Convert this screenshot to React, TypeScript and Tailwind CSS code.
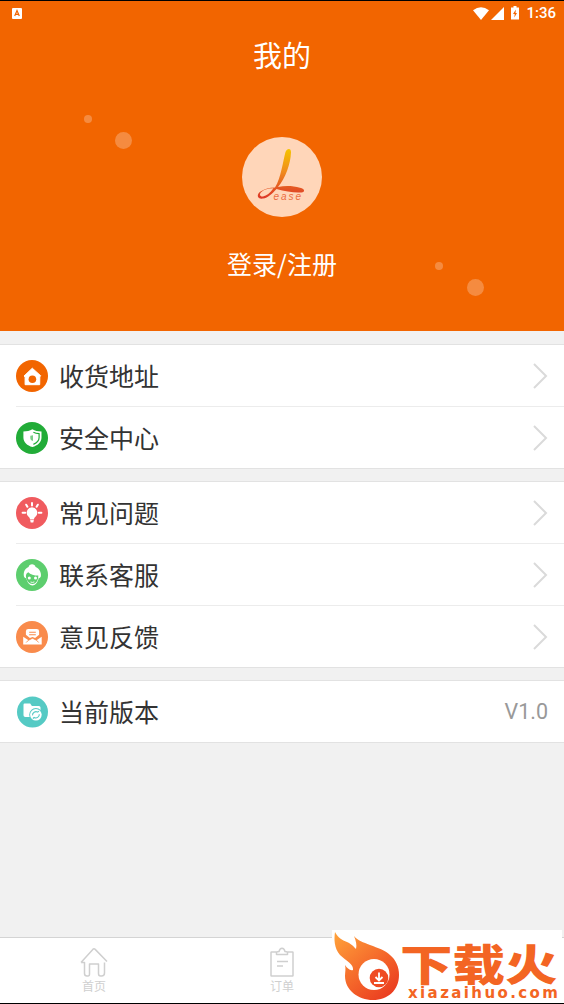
import type { ReactNode } from "react";

type MenuItem = {
  label: string;
  icon: ReactNode;
  value?: string;
};

const HomeBadge = () => (
  <svg viewBox="0 0 32 32" className="size-8 shrink-0">
    <circle cx="16" cy="16" r="16" fill="#f26500" />
    <path
      d="M16.3 8.2 24.7 15.8 23.8 16.8 23.7 24.7H9.1V16.8L8 16.1Z"
      fill="#fff"
      stroke="#fff"
      strokeWidth="1"
      strokeLinejoin="round"
    />
    <circle cx="16.4" cy="19.2" r="3.8" fill="#f26500" />
  </svg>
);

const ShieldBadge = () => (
  <svg viewBox="0 0 32 32" className="size-8 shrink-0">
    <circle cx="16" cy="16" r="16" fill="#22ac38" />
    <path d="M16.4 7.2c2.6 1.8 5.2 2.2 9.1 2.2v6c0 4.9-3.9 8-9.1 9.6-5.2-1.6-9-4.7-9-9.6v-6c3.4 0 6.4-.4 9-2.2Z" fill="#fff" />
    <path d="M17.4 10.300c2 1 3.700 1.300 5.700 1.400v3.900c0 3.300-2.400 5.400-5.700 6.800" fill="none" stroke="#22ac38" strokeWidth="1.200" />
    <path d="M17 13.300v5.800c-1.700-.6-2.700-1.600-2.700-3.100V13.700c1 0 1.900-.1 2.700-.4Z" fill="#22ac38" opacity=".6" />
  </svg>
);

const BulbBadge = () => (
  <svg viewBox="0 0 32 32" className="size-8 shrink-0">
    <circle cx="16" cy="16" r="16" fill="#f05b5f" />
    <path d="M16 10.300a5.500 5.500 0 0 1 3.200 9.800c-.8.7-1.100 1.300-1.200 2.500l-.7 2.800h-2.600l-.7-2.800c-.1-1.200-.4-1.800-1.200-2.500a5.500 5.500 0 0 1 3.200-9.800Z" fill="#fff" />
    <path d="M14 22.600h4" stroke="#f05b5f" strokeWidth=".6" />
    <path d="M16 6v2.600M10.200 7.700l1.200 2M21.800 7.700l-1.200 2M6.600 15.700h2.600M22.800 15.700h2.600" stroke="#fff" strokeWidth="2" strokeLinecap="round" />
  </svg>
);

const ServiceBadge = () => (
  <svg viewBox="0 0 32 32" className="size-8 shrink-0">
    <circle cx="16" cy="16" r="16" fill="#5dce6e" />
    <path d="M12.600 7.900c.5-3.400 6.300-3.400 7 0 4.400 1.900 6 6.400 5.200 9.700-.2 1-1.300 1.700-2 1.500-1.200 4.600-3.600 7.500-6.300 7.500s-5.200-2.900-6.300-7.500c-1 .2-2-.6-2.200-1.500-.8-4 .3-7.800 4.600-9.700Z" fill="#fff" />
    <path d="M9.900 17c0-1.600.8-3 2.400-3.800 2 2.600 5.800 3.300 10 3.300.2 5-2.700 8.500-5.800 8.500-3.300 0-6.300-3.400-6.600-8Z" fill="#5dce6e" />
    <circle cx="13.300" cy="19" r="1.500" fill="#fff" />
    <circle cx="19.500" cy="19" r="1.500" fill="#fff" />
    <path d="M14.500 23q1.800.9 3.900-.1" stroke="#fff" strokeWidth=".9" fill="none" />
  </svg>
);

const MailBadge = () => (
  <svg viewBox="0 0 32 32" className="size-8 shrink-0">
    <circle cx="16" cy="16" r="16" fill="#f98b4c" />
    <path d="M12.300 8h8.400q2.400 0 2.400 2.300v3.500l-4 3.200-2.600-1-2.600 1-4-3.200v-3.500q0-2.300 2.400-2.300Z" fill="#fff" />
    <path d="M13.200 11.200h6.600M13.200 13.800h6.600" stroke="#f98b4c" strokeWidth="1.100" />
    <path d="m7.200 15.800 5.300 3.400 4-1.900 4 1.900 5.200-3.400v7.700H7.200Z" fill="#fff" />
    <path d="m10.200 21.500 2.300-2.300 4-2 4 2 2.200 2.300" stroke="#f98b4c" strokeWidth=".9" fill="none" />
  </svg>
);

const VersionBadge = () => (
  <svg viewBox="0 0 32 32" className="size-8 shrink-0">
    <circle cx="16.500" cy="16" r="15.500" fill="#55cac4" />
    <path d="M8.600 7.600h5.600l1.700 2.300h7q1.600 0 1.600 1.600v9.600H9.300q-1.800 0-1.800-1.800V8.700q0-1.100 1.100-1.100Z" fill="#fff" />
    <circle cx="19.900" cy="18.800" r="6.700" fill="#55cac4" />
    <circle cx="19.900" cy="18.800" r="5.800" fill="#fff" />
    <path d="M16.500 19.400a3.500 3.500 0 0 1 5.200-3.300l1.200-1M23.300 18.200a3.500 3.500 0 0 1-5.200 3.300l-1.200 1" stroke="#55cac4" strokeWidth="1.100" fill="none" />
  </svg>
);

const menuGroups: MenuItem[][] = [
  [
    { label: "收货地址", icon: <HomeBadge /> },
    { label: "安全中心", icon: <ShieldBadge /> },
  ],
  [
    { label: "常见问题", icon: <BulbBadge /> },
    { label: "联系客服", icon: <ServiceBadge /> },
    { label: "意见反馈", icon: <MailBadge /> },
  ],
  [{ label: "当前版本", icon: <VersionBadge />, value: "V1.0" }],
];

function StatusBar() {
  return (
    <div className="flex h-6 items-center justify-between pr-2 pl-3 text-white">
      <svg viewBox="0 0 10 11" className="h-[11px] w-2.5">
        <rect width="10" height="11" rx="1" fill="#fff" />
        <path d="m2.700 8 2.300-5.500L7.300 8M3.500 6.300h3" stroke="#f26500" strokeWidth="1.200" fill="none" />
      </svg>
      <div className="flex items-center">
        <svg viewBox="0 0 16 13" className="h-[13px] w-4">
          <path d="M8 13 0 3.200q8-6 16 0Z" fill="#fff" />
        </svg>
        <svg viewBox="0 0 13 13" className="ml-0.5 size-[13px]">
          <path d="M13 0v13H0Z" fill="#fff" />
        </svg>
        <svg viewBox="0 0 8 14" className="ml-[7px] h-3.5 w-2">
          <path d="M2.500 0h3v1.400H8V13.500H0V1.400h2.500Z" fill="#fff" />
          <path d="M4.900 3.500 2 8h1.700L3.300 11.500 6 7H4.500Z" fill="#f26500" />
        </svg>
        <span className="ml-[7px] font-['Roboto',sans-serif] text-[15px] leading-none font-medium">1:36</span>
      </div>
    </div>
  );
}

function Logo() {
  return (
    <svg viewBox="0 0 80 80" className="size-20">
      <defs>
        <linearGradient id="stroke" x1="0" y1="0" x2="0" y2="1">
          <stop offset="0" stopColor="#f5c400" />
          <stop offset=".45" stopColor="#f08c1c" />
          <stop offset="1" stopColor="#dc3528" />
        </linearGradient>
      </defs>
      <circle cx="40" cy="40" r="40" fill="#ffd6b9" />
      <path
        d="M43.500 15c1.500-4 5.800-4.200 5.500.5C48.500 27 43.500 41 36 50c7-1.500 15-1.200 22 .7 5.500 1.500 5 4.300 1.500 4.700-6 .8-16-.9-25-3.400-4.500 4.800-8.500 8.800-13.500 9.600-6 .8-7-4.600-2-7.400 3.500-2.200 8.500-3.400 14-3.600C39 41 41 24 43.500 15ZM31.500 51.300c-5.500.2-9.500 1.400-11.800 3.400-3 2.400-1.800 5.100 1.300 4.700 3.500-.4 7-3.300 10.500-8.100Z"
        fill="url(#stroke)"
        fillRule="evenodd"
      />
      <text x="31.500" y="63" fontFamily="Liberation Sans, sans-serif" fontSize="10" fontStyle="italic" letterSpacing="2" fill="#eb6d42">
        ease
      </text>
    </svg>
  );
}

function Header() {
  return (
    <header className="relative flex h-[331px] flex-col border-t border-black bg-[#f26500] text-white">
      <StatusBar />
      <h1 className="mt-2 text-center text-[29px] leading-[42px]">我的</h1>
      <div className="mt-[62px] flex justify-center">
        <Logo />
      </div>
      <p className="mt-7 text-center text-[25px] leading-9">登录/注册</p>
      <span className="absolute top-[114px] left-[84px] size-2 rounded-full bg-white/25" />
      <span className="absolute top-[131px] left-[115px] size-[17px] rounded-full bg-white/25" />
      <span className="absolute top-[261px] left-[435px] size-2 rounded-full bg-white/25" />
      <span className="absolute top-[278px] left-[467px] size-[17px] rounded-full bg-white/25" />
    </header>
  );
}

function MenuRow({ item, first }: { item: MenuItem; first: boolean }) {
  return (
    <div className="pl-4">
      <div className={first ? "flex h-[61px] items-center pr-4" : "flex h-[62px] items-center border-t border-[#ececec] pr-4"}>
        {item.icon}
        <span className="ml-[11px] flex-1 pb-0.5 text-[25px] leading-9 text-[#333]">{item.label}</span>
        {item.value ? (
          <span className="pt-0.5 font-['Roboto',sans-serif] text-[21.5px] text-[#999]">{item.value}</span>
        ) : (
          <svg viewBox="0 0 15 26" className="h-[26px] w-[15px]">
            <path d="m1 1 12 12L1 25" fill="none" stroke="#dadada" strokeWidth="2" />
          </svg>
        )}
      </div>
    </div>
  );
}

function TabBar() {
  return (
    <nav className="grid h-[67px] grid-cols-3 border-t border-b border-t-[#d4d4d4] border-b-black bg-white text-xs leading-4 text-[#cfcfcf]">
      <div className="flex flex-col items-center pt-[9px]">
        <svg viewBox="0 0 28 30" className="h-[30px] w-7" fill="none" stroke="currentColor" strokeWidth="1.500" strokeLinejoin="round">
          <path d="M1 15.500 12.800 2.400q1.200-1.200 2.400 0L27 14.500M1 15.500h3.500v11q0 2.500 2.500 2.500h1q1.500 0 1.500-2V17h9v9.500q0 2.500 2 2.500h1q3 0 3-3V15.500" />
        </svg>
        <span className="pt-px">首页</span>
      </div>
      <div className="flex flex-col items-center pt-[9px]">
        <svg viewBox="0 0 24 30" className="h-[30px] w-6" fill="none" stroke="currentColor" strokeWidth="1.500" strokeLinejoin="round">
          <path d="M6 5H1.500Q1 5 1 5.500v23q0 .5.500.5h21q.5 0 .5-.5v-23q0-.5-.5-.5H18" />
          <path d="M6.500 7.500V5l2.500-.5C10 .2 14 .2 15 4.500l2.500.5v2.500ZM7 14.500h11M7 19h6" />
        </svg>
        <span className="pt-px">订单</span>
      </div>
    </nav>
  );
}

function Watermark() {
  return (
    <div className="absolute top-[930px] left-[332px] flex h-[73px] w-[230px] bg-white">
      <svg viewBox="0 0 70 73" className="h-[73px] w-[70px] shrink-0">
        <defs>
          <linearGradient id="flame" x1="0" y1="0" x2=".8" y2="1">
            <stop offset="0" stopColor="#ffa33a" />
            <stop offset=".6" stopColor="#f4652a" />
            <stop offset="1" stopColor="#ea3c20" />
          </linearGradient>
        </defs>
        <path
          d="M3 2c3 6 7 8 12 10 6 3 8 6 9 7 1-4 0-8-2-13 4 5 9 6 16 9 8 3 15 5 20 10 6 5 9 12 9 20 0 15-11 25-26 25S13 60 13 46c0-4 1-7 0-11 2 3 5 6 8 5 1-6-7-9-13-15C2 18 2 9 3 2Z"
          fill="url(#flame)"
        />
        <circle cx="42" cy="44.500" r="15.500" fill="#fff" />
        <circle cx="47" cy="48" r="9.300" fill="#ef4b23" />
        <path d="M47 42.500v7M43.500 47l3.500 3.500 3.500-3.500M42 53h10" stroke="#fff" strokeWidth="1.800" fill="none" />
      </svg>
      <div className="flex flex-col pt-2.5 text-[#f36523]">
        <span className="-ml-0.5 origin-top-left scale-x-[1.22] text-[43px] leading-[44px] font-black whitespace-nowrap">
          下载火
        </span>
        <span className="mt-[3px] ml-1.5 font-['DejaVu_Sans',sans-serif] text-[15px] leading-[13px] font-bold tracking-[2.400px]">
          xiazaihuo.com
        </span>
      </div>
    </div>
  );
}

export default function App() {
  return (
    <main className="relative flex h-[1004px] w-[564px] flex-col overflow-hidden bg-[#f1f1f1] font-['Noto_Sans_CJK_SC',sans-serif]">
      <Header />
      <div className="mt-[13px] flex flex-1 flex-col gap-3">
        {menuGroups.map((group, index) => (
          <section key={index} className="border-y border-[#e2e2e2] bg-white">
            {group.map((item, i) => (
              <MenuRow key={item.label} item={item} first={i === 0} />
            ))}
          </section>
        ))}
      </div>
      <TabBar />
      <Watermark />
    </main>
  );
}
